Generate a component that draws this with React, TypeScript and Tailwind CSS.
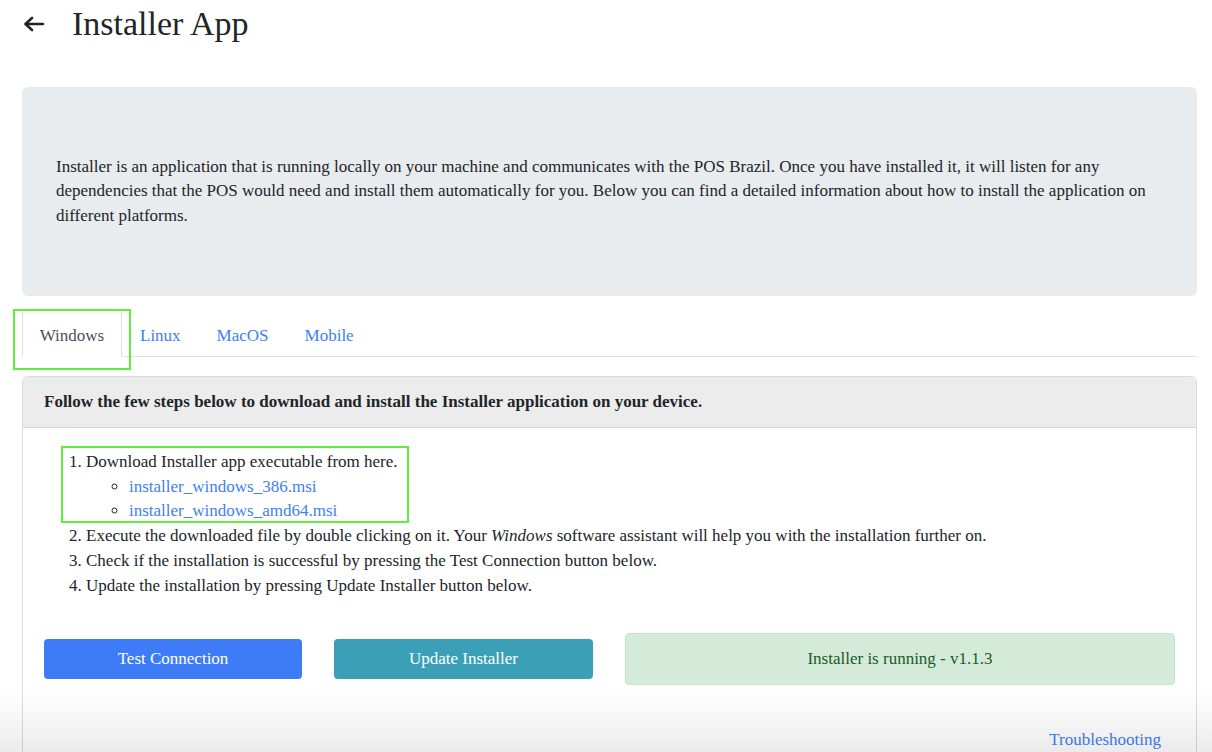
const serif = { fontFamily: '"Liberation Serif", "Times New Roman", serif' };

function BackArrow() {
  return (
    <svg width="22" height="16" viewBox="0 0 22 16" fill="none" stroke="#1f2328" strokeWidth="2.6" strokeLinecap="round" strokeLinejoin="round">
      <path d="M20 8H3" />
      <path d="M9 2L2.5 8L9 14" />
    </svg>
  );
}

export default function App() {
  const tabs = ["Windows", "Linux", "MacOS", "Mobile"];

  return (
    <div className="relative h-[752px] overflow-hidden bg-white text-[#212529] text-[17px]" style={serif}>
      {/* Header */}
      <div className="flex h-12 items-center">
        <div className="ml-[23px] flex w-[49px] items-center">
          <BackArrow />
        </div>
        <h1 className="text-[34px] leading-none">Installer App</h1>
      </div>

      {/* Intro */}
      <div className="ml-[22px] mr-[15px] mt-[39px] flex h-[209px] items-center rounded-md bg-[#e9ecef] px-[34px]">
        <p className="leading-[24.5px]">
          Installer is an application that is running locally on your machine and communicates with the POS Brazil. Once you have installed it, it will listen for any dependencies that the POS would need and install them automatically for you. Below you can find a detailed information about how to install the application on different platforms.
        </p>
      </div>

      {/* Tabs */}
      <div className="ml-[22px] mr-[15px] mt-[13px] flex h-[48px] border-b border-[#dee2e6]">
        {tabs.map((t, i) =>
          i === 0 ? (
            <div key={t} className="relative -mb-px flex w-[100px] items-center justify-center rounded-t-md border border-b-white border-[#dee2e6] bg-white pt-[6px] text-[#495057]">
              {t}
              <div className="pointer-events-none absolute left-[-10px] top-[-1px] h-[61px] w-[118px] border-2 border-[#5fee3c]" />
            </div>
          ) : (
            <div key={t} className="flex items-center px-[18px] pt-[6px] text-[#4080f5]">
              {t}
            </div>
          )
        )}
      </div>

      {/* Card */}
      <div className="ml-[22px] mr-[15px] mt-[19px] rounded-t-md border border-b-0 border-[#dcdcdc]">
        <div className="flex h-[51px] items-center rounded-t-md border-b border-[#d4d4d4] bg-[#ececec] px-[21px] font-bold">
          Follow the few steps below to download and install the Installer application on your device.
        </div>

        <div className="px-[21px] pb-[40px] pt-[22px]">
          <ol className="relative ml-[42px] list-decimal leading-[24.7px]">
            <li>
              Download Installer app executable from here.
              <ul className="ml-[43px] list-[circle]">
                <li>
                  <span className="text-[#4080f5]">installer_windows_386.msi</span>
                </li>
                <li>
                  <span className="text-[#4080f5]">installer_windows_amd64.msi</span>
                </li>
              </ul>
              <div className="pointer-events-none absolute left-[-25px] top-[-4px] h-[77px] w-[348px] border-2 border-[#5fee3c]" />
            </li>
            <li>
              Execute the downloaded file by double clicking on it. Your <i>Windows</i> software assistant will help you with the installation further on.
            </li>
            <li>Check if the installation is successful by pressing the Test Connection button below.</li>
            <li>Update the installation by pressing Update Installer button below.</li>
          </ol>

          <div className="mt-[35px] flex items-center gap-8">
            <button className="h-10 w-[258px] rounded bg-[#3e7cf7] text-white" style={serif}>
              Test Connection
            </button>
            <button className="h-10 w-[259px] rounded bg-[#3ba0b7] text-white" style={serif}>
              Update Installer
            </button>
            <div className="flex h-[52px] flex-1 items-center justify-center rounded border border-[#c3e6cb] bg-[#d5ebd9] text-[#1a5a2a]">
              Installer is running - v1.1.3
            </div>
          </div>

          <div className="mt-[42px] flex justify-end pr-[14px] text-[#4080f5]">Troubleshooting</div>
        </div>
      </div>

      <div className="pointer-events-none absolute bottom-0 left-0 right-0 h-[60px] bg-gradient-to-b from-transparent to-black/[0.08]" />
    </div>
  );
}
